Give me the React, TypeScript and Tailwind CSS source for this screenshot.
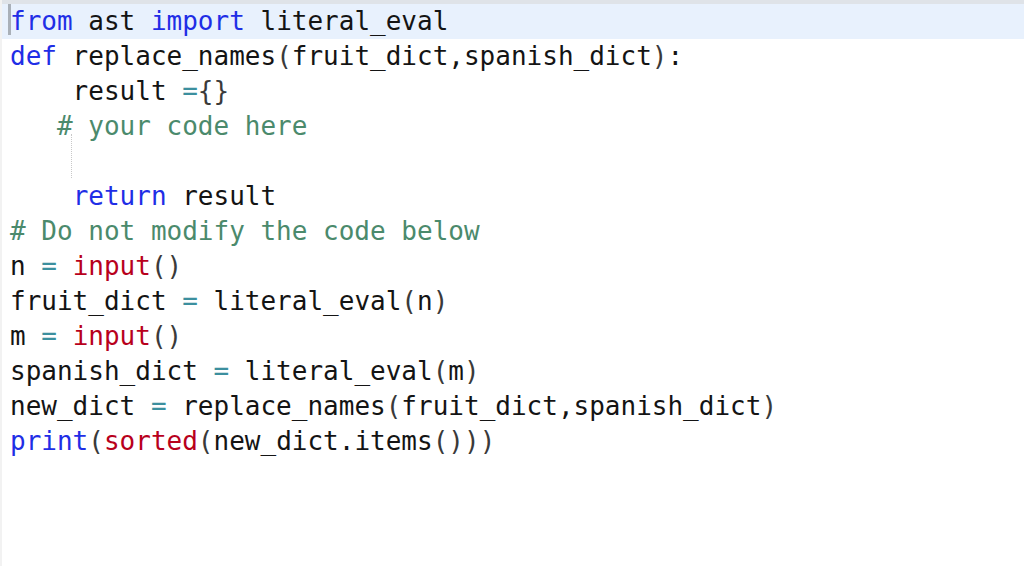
import React from 'react';

type Tok = [string, string?];

const K = 'text-[#1f2ee6]';
const C = 'text-[#4b8a6c]';
const R = 'text-[#b8001c]';
const O = 'text-[#3c8f9e]';
const P = 'text-[#3a3a3a]';

const lines: Tok[][] = [
  [['from', K], [' ast '], ['import', K], [' literal_eval']],
  [['def', K], [' replace_names'], ['(', P], ['fruit_dict,spanish_dict'], [')', P], [':']],
  [['    result '], ['=', O], ['{}', P]],
  [['   # your code here', C]],
  [[' ']],
  [['    '], ['return', K], [' result']],
  [['# Do not modify the code below', C]],
  [['n '], ['=', O], [' '], ['input', R], ['()', P]],
  [['fruit_dict '], ['=', O], [' literal_eval'], ['(', P], ['n'], [')', P]],
  [['m '], ['=', O], [' '], ['input', R], ['()', P]],
  [['spanish_dict '], ['=', O], [' literal_eval'], ['(', P], ['m'], [')', P]],
  [['new_dict '], ['=', O], [' replace_names'], ['(', P], ['fruit_dict,spanish_dict'], [')', P]],
  [['print', K], ['(', P], ['sorted', R], ['(', P], ['new_dict.items'], ['()))', P]],
];

export default function App() {
  return (
    <div className="w-[1024px] h-[566px] bg-white overflow-hidden border-l-2 border-[#f2f2f2]">
      <div className="h-[4px] bg-[#dfe3e8]" />
      <div
        className="text-[26px] leading-[35px] text-[#141414] whitespace-pre"
        style={{ fontFamily: '"DejaVu Sans Mono", "Liberation Mono", monospace' }}
      >
        {lines.map((ln, i) => (
          <div
            key={i}
            className={
              'relative h-[35px] pl-[8px] ' + (i === 0 ? 'bg-[#e8f1fd]' : '')
            }
          >
            {i === 0 && (
              <span className="absolute left-[6px] top-0 w-[3px] h-[31px] bg-[#a9b0b8]" />
            )}
            {i === 4 && (
              <span className="absolute left-[69px] top-[-10px] h-[44px] border-l border-dotted border-[#c8c8c8]" />
            )}
            {ln.map(([t, c], j) => (
              <span key={j} className={c}>
                {t}
              </span>
            ))}
          </div>
        ))}
      </div>
    </div>
  );
}
